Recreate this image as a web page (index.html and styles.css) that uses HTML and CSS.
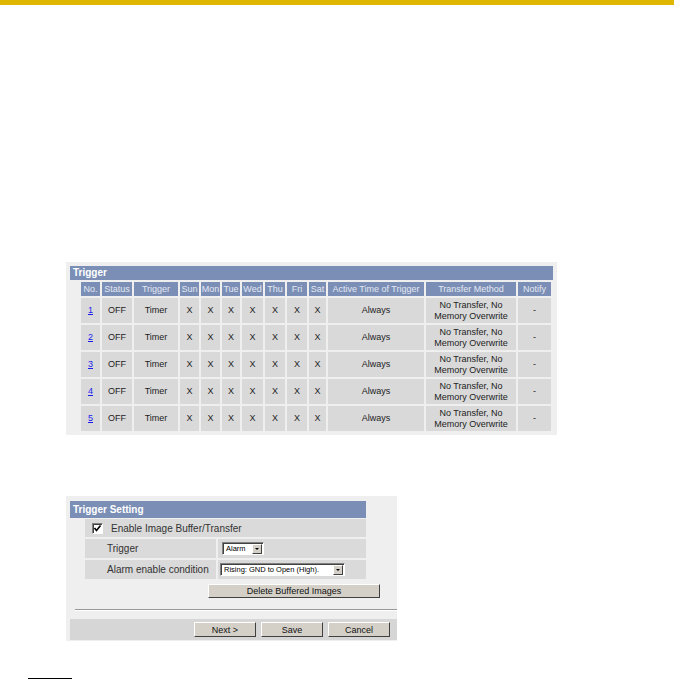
FILE: index.html
```html
<!DOCTYPE html>
<html lang="en">
<head>
    <meta charset="UTF-8">
    <title>Trigger</title>
    <link rel="stylesheet" href="styles.css">
</head>
<body>
<div class="topbar"></div>

<div class="panel trigger-panel">
    <div class="panel-title">Trigger</div>
    <table class="trigger-table">
        <colgroup>
            <col style="width:19px"><col style="width:30px"><col style="width:44px">
            <col style="width:19px"><col style="width:19px"><col style="width:18px">
            <col style="width:21px"><col style="width:20px"><col style="width:20px">
            <col style="width:17px"><col style="width:96px"><col style="width:90px">
            <col style="width:33px">
        </colgroup>
        <thead>
        <tr>
            <th>No.</th><th>Status</th><th>Trigger</th><th>Sun</th><th>Mon</th><th>Tue</th>
            <th>Wed</th><th>Thu</th><th>Fri</th><th>Sat</th><th>Active Time of Trigger</th>
            <th>Transfer Method</th><th>Notify</th>
        </tr>
        </thead>
        <tbody id="rows"></tbody>
    </table>
</div>

<div class="panel setting-panel">
    <div class="panel-title setting-title">Trigger Setting</div>
    <div class="setting-rows">
        <div class="setting-row full">
            <span class="check"><svg viewBox="0 0 9 9" width="9" height="9"><path d="M1.5 4 L3.5 6.5 L7.5 1.5" stroke="#000" stroke-width="1.6" fill="none"/></svg></span>
            Enable Image Buffer/Transfer
        </div>
        <div class="setting-row">
            <div class="label">Trigger</div>
            <div class="value"><span class="select sel-alarm"><span class="sel-text">Alarm</span><span class="sel-arrow"></span></span></div>
        </div>
        <div class="setting-row">
            <div class="label">Alarm enable condition</div>
            <div class="value"><span class="select sel-cond"><span class="sel-text">Rising: GND to Open (High).</span><span class="sel-arrow"></span></span></div>
        </div>
    </div>
    <div class="delete-line">
        <button class="btn btn-delete">Delete Buffered Images</button>
    </div>
    <div class="divider"></div>
    <div class="button-bar">
        <button class="btn">Next &gt;</button>
        <button class="btn">Save</button>
        <button class="btn">Cancel</button>
    </div>
</div>

<div class="note-line"></div>

<script>
    var tbody = document.getElementById("rows");
    for (var i = 1; i <= 5; i++) {
        var tr = document.createElement("tr");
        var html = '<td><a href="#">' + i + '</a></td><td>OFF</td><td>Timer</td>';
        for (var d = 0; d < 7; d++) {
            html += '<td>X</td>';
        }
        html += '<td>Always</td><td>No Transfer, No<br>Memory Overwrite</td><td>-</td>';
        tr.innerHTML = html;
        tbody.appendChild(tr);
    }
</script>
</body>
</html>
```
FILE: styles.css
```css
body {
    margin: 0;
    font-family: "Liberation Sans", Arial, sans-serif;
    color: #222;
    background: #fff;
}

.topbar {
    height: 5px;
    background-color: #dfb700;
}

.panel {
    background-color: #efefef;
    box-sizing: border-box;
}

.panel-title {
    height: 14px;
    line-height: 14px;
    background-color: #7b8fb6;
    color: #fff;
    font-size: 10px;
    font-weight: bold;
    padding-left: 3px;
}

/* trigger list */
.trigger-panel {
    margin: 257px 0 0 66px;
    width: 491px;
    padding: 4px 4px 2px;
}

.trigger-table {
    margin-left: 9px;
    border-collapse: separate;
    border-spacing: 2px;
    table-layout: fixed;
    font-size: 9px;
}

.trigger-table th {
    height: 14px;
    padding: 0;
    background-color: #7b8fb6;
    color: #e4e8f2;
    font-weight: normal;
    text-align: center;
    white-space: nowrap;
    overflow: hidden;
}

.trigger-table td {
    height: 25px;
    padding: 0;
    background-color: #d9d9d9;
    text-align: center;
    line-height: 11px;
    color: #222;
}

.trigger-table a {
    color: #1a1aee;
    text-decoration: underline;
}

/* trigger setting */
.setting-panel {
    margin: 61px 0 0 66px;
    width: 331px;
    height: 145px;
    padding: 5px 0 0 4px;
}

.setting-title {
    width: 296px;
    height: 17px;
    line-height: 17px;
    box-sizing: border-box;
    font-size: 10px;
}

.setting-rows {
    margin: 1px 0 0 15px;
    width: 281px;
    display: flex;
    flex-direction: column;
    gap: 2px;
    font-size: 10px;
    color: #333;
}

.setting-row {
    display: grid;
    grid-template-columns: 131px 148px;
    column-gap: 2px;
    height: 19px;
}

.setting-row.full {
    display: flex;
    align-items: center;
    height: 18px;
    background-color: #dadada;
}

.setting-row .label,
.setting-row .value {
    background-color: #dadada;
    display: flex;
    align-items: center;
}

.setting-row .label {
    padding-left: 22px;
}

.setting-row .value {
    padding-left: 2px;
}

.check {
    display: inline-block;
    width: 9px;
    height: 9px;
    margin: 0 6px 0 7px;
    background: #fff;
    border: 1px solid;
    border-color: #808080 #fff #fff #808080;
    box-shadow: inset 1px 1px 0 #404040;
    line-height: 0;
}

.select {
    display: inline-flex;
    align-items: center;
    height: 13px;
    background: #fff;
    border: 1px solid;
    border-color: #808080 #fff #fff #808080;
    box-shadow: inset 1px 1px 0 #404040;
    font-size: 7.5px;
    color: #000;
    box-sizing: border-box;
}

.sel-alarm {
    width: 42px;
    margin-left: 2px;
}

.sel-cond {
    width: 125px;
}

.sel-text {
    flex: 1;
    padding-left: 3px;
    white-space: nowrap;
    overflow: hidden;
}

.sel-arrow {
    width: 10px;
    height: 10px;
    margin-right: 1px;
    background: #d4d0c8;
    border: 1px solid;
    border-color: #fff #404040 #404040 #fff;
    box-sizing: border-box;
    position: relative;
}

.sel-arrow::after {
    content: "";
    position: absolute;
    left: 2px;
    top: 3px;
    border-left: 2px solid transparent;
    border-right: 2px solid transparent;
    border-top: 2px solid #000;
}

.btn {
    font-family: "Liberation Sans", Arial, sans-serif;
    font-size: 9px;
    color: #111;
    background-color: #d4d0c8;
    border: 1px solid;
    border-color: #fff #404040 #404040 #fff;
    padding: 0;
    height: 15px;
    width: 62px;
    box-sizing: border-box;
}

.delete-line {
    margin: 5px 0 0 138px;
    height: 14px;
}

.btn-delete {
    width: 172px;
    height: 14px;
    display: block;
}

.divider {
    margin: 11px 0 0 5px;
    height: 1px;
    background-color: #999;
    border-bottom: 1px solid #fff;
}

.button-bar {
    margin-top: 8px;
    height: 21px;
    background-color: #d6d6d6;
    display: flex;
    justify-content: flex-end;
    align-items: center;
    gap: 5px;
    padding-right: 7px;
}

.note-line {
    margin: 37px 0 0 28px;
    width: 44px;
    height: 2px;
    background-color: #000;
}
```
